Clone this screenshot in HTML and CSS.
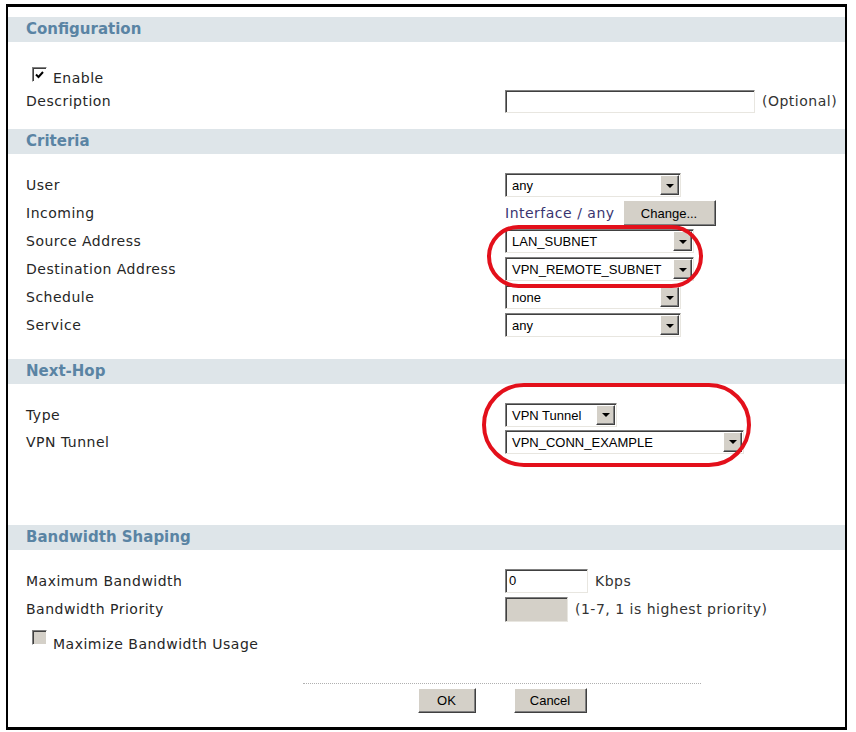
FILE: index.html
```html
<!DOCTYPE html>
<html lang="en">
<head>
    <meta charset="UTF-8">
    <title>Policy Route Edit</title>
    <link rel="stylesheet" href="styles.css">
</head>
<body>

<div class="frame">

    <!-- Configuration -->
    <div class="band">Configuration</div>
    <div class="section section-config">
        <div class="row row-check">
            <label class="check"><span class="box checked"><svg viewBox="0 0 9 9" width="9" height="9"><path d="M1 4.5 L3.5 7 L8 2" fill="none" stroke="#000" stroke-width="2"/></svg></span>Enable</label>
        </div>
        <div class="row row-short">
            <span class="label">Description</span>
            <div class="ctrl">
                <span class="text-input desc"></span>
                <span class="note">(Optional)</span>
            </div>
        </div>
    </div>

    <!-- Criteria -->
    <div class="band">Criteria</div>
    <div class="section section-criteria">
        <div class="row">
            <span class="label">User</span>
            <div class="ctrl"><div class="select w-176"><span class="value">any</span><span class="arrow"></span></div></div>
        </div>
        <div class="row">
            <span class="label">Incoming</span>
            <div class="ctrl">
                <span class="link">Interface / any</span>
                <span class="button change">Change...</span>
            </div>
        </div>
        <div class="row">
            <span class="label">Source Address</span>
            <div class="ctrl"><div class="select w-189"><span class="value">LAN_SUBNET</span><span class="arrow"></span></div></div>
        </div>
        <div class="row">
            <span class="label">Destination Address</span>
            <div class="ctrl"><div class="select w-189"><span class="value">VPN_REMOTE_SUBNET</span><span class="arrow"></span></div></div>
        </div>
        <div class="row">
            <span class="label">Schedule</span>
            <div class="ctrl"><div class="select w-176"><span class="value">none</span><span class="arrow"></span></div></div>
        </div>
        <div class="row">
            <span class="label">Service</span>
            <div class="ctrl"><div class="select w-176"><span class="value">any</span><span class="arrow"></span></div></div>
        </div>
    </div>

    <!-- Next-Hop -->
    <div class="band">Next-Hop</div>
    <div class="section section-hop">
        <div class="row row-hop">
            <span class="label">Type</span>
            <div class="ctrl"><div class="select w-112"><span class="value">VPN Tunnel</span><span class="arrow"></span></div></div>
        </div>
        <div class="row row-hop">
            <span class="label">VPN Tunnel</span>
            <div class="ctrl"><div class="select w-239"><span class="value">VPN_CONN_EXAMPLE</span><span class="arrow"></span></div></div>
        </div>
    </div>

    <!-- Bandwidth Shaping -->
    <div class="band">Bandwidth Shaping</div>
    <div class="section section-bw">
        <div class="row">
            <span class="label">Maximum Bandwidth</span>
            <div class="ctrl">
                <span class="text-input bw">0</span>
                <span class="note">Kbps</span>
            </div>
        </div>
        <div class="row">
            <span class="label">Bandwidth Priority</span>
            <div class="ctrl">
                <span class="text-input prio disabled"></span>
                <span class="note">(1-7, 1 is highest priority)</span>
            </div>
        </div>
        <div class="row row-check row-usage">
            <label class="check"><span class="box disabled"></span>Maximize Bandwidth Usage</label>
        </div>
    </div>

    <!-- Buttons -->
    <div class="footer">
        <span class="button ok">OK</span>
        <span class="button cancel">Cancel</span>
    </div>

    <!-- Highlight marks -->
    <div class="oval oval-address"></div>
    <div class="oval oval-hop"></div>

</div>

</body>
</html>
```

FILE: styles.css
```css
body {
    margin: 0;
    background: #fff;
    font-family: "DejaVu Sans", Verdana, sans-serif;
    font-size: 14px;
    letter-spacing: 0.5px;
    color: #262626;
}

.frame {
    position: relative;
    box-sizing: border-box;
    width: 841px;
    height: 726px;
    margin: 4px 0 0 6px;
    border: 2px solid #000;
    border-top-width: 3px;
    border-bottom-width: 3px;
    padding-top: 10px;
    background: #fff;
}

.band {
    height: 25px;
    line-height: 25px;
    padding-left: 18px;
    background: #dee5e9;
    color: #5a84a4;
    font-size: 15px;
    font-weight: bold;
    letter-spacing: 0;
}

.section-config {
    padding: 25px 0 16px;
}

.section-criteria {
    padding: 17px 0 20px;
}

.section-hop {
    padding: 17px 0 70px;
}

.section-bw {
    padding: 17px 0 0;
}

.row {
    display: grid;
    grid-template-columns: 479px auto;
    align-items: center;
    height: 28px;
    padding-left: 18px;
}

.row-short {
    height: 24px;
}

.row-hop {
    height: 27px;
}

.row-check {
    height: 22px;
    display: block;
}

.row-usage {
    margin-top: 7px;
}

.ctrl {
    display: flex;
    align-items: center;
}

/* checkboxes */
.check {
    display: block;
    line-height: 22px;
    padding-left: 6px;
}

.box {
    display: inline-flex;
    align-items: center;
    justify-content: center;
    box-sizing: border-box;
    width: 15px;
    height: 15px;
    margin-right: 6px;
    vertical-align: 4px;
    background: #fff;
    border: 1px solid;
    border-color: #808080 #fff #fff #808080;
    box-shadow: inset 1px 1px 0 #404040;
}

.box.disabled {
    background: #d4d0c8;
}

/* text inputs */
.text-input {
    display: block;
    box-sizing: border-box;
    height: 23px;
    background: #fff;
    border: 1px solid;
    border-color: #808080 #e8e6e0 #e8e6e0 #808080;
    box-shadow: inset 1px 1px 0 #404040;
    font: 13px/21px "Liberation Sans", Arial, sans-serif;
    letter-spacing: normal;
    color: #000;
    padding-left: 3px;
}

.desc {
    width: 250px;
}

.bw {
    width: 83px;
    height: 24px;
}

.prio {
    width: 63px;
    height: 25px;
}

.text-input.disabled {
    background: #d4d0c8;
}

.note {
    margin-left: 7px;
    color: #333;
}

/* selects */
.select {
    display: flex;
    box-sizing: border-box;
    height: 24px;
    background: #fff;
    border: 1px solid;
    border-color: #808080 #e8e6e0 #e8e6e0 #808080;
    box-shadow: inset 1px 1px 0 #404040;
    font: 13px "Liberation Sans", Arial, sans-serif;
    letter-spacing: normal;
    color: #000;
}

.select .value {
    flex: 1;
    padding: 1px 0 0 6px;
    line-height: 21px;
    white-space: nowrap;
    overflow: hidden;
}

.select .arrow {
    display: flex;
    align-items: center;
    justify-content: center;
    box-sizing: border-box;
    width: 19px;
    margin: 1px 1px 1px 0;
    background: #d4d0c8;
    border: 1px solid;
    border-color: #fff #404040 #404040 #fff;
    box-shadow: inset -1px -1px 0 #808080;
}

.select .arrow::before {
    content: "";
    border-left: 4px solid transparent;
    border-right: 4px solid transparent;
    border-top: 4px solid #000;
    margin-top: 1px;
}

.w-112 { width: 112px; }
.w-176 { width: 176px; }
.w-189 { width: 189px; }
.w-239 { width: 239px; }

.link {
    color: #3a3470;
    margin-right: 8px;
}

/* buttons */
.button {
    display: inline-flex;
    align-items: center;
    justify-content: center;
    box-sizing: border-box;
    height: 25px;
    background: #d4d0c8;
    border: 1px solid;
    border-color: #fff #404040 #404040 #fff;
    box-shadow: inset -1px -1px 0 #808080;
    font: 13px "Liberation Sans", Arial, sans-serif;
    letter-spacing: normal;
    color: #000;
}

.change {
    width: 93px;
    height: 26px;
}

.ok {
    width: 58px;
}

.cancel {
    width: 73px;
}

.footer {
    display: flex;
    justify-content: center;
    gap: 38px;
    width: 398px;
    margin: 31px 0 0 295px;
    padding-top: 4px;
    border-top: 1px dotted #b0b0b0;
}

/* red highlight marks */
.oval {
    position: absolute;
    box-sizing: border-box;
    border: 4px solid #e3101b;
    border-radius: 50px;
}

.oval-address {
    left: 479px;
    top: 218px;
    width: 216px;
    height: 63px;
}

.oval-hop {
    left: 474px;
    top: 376px;
    width: 269px;
    height: 84px;
}
```
